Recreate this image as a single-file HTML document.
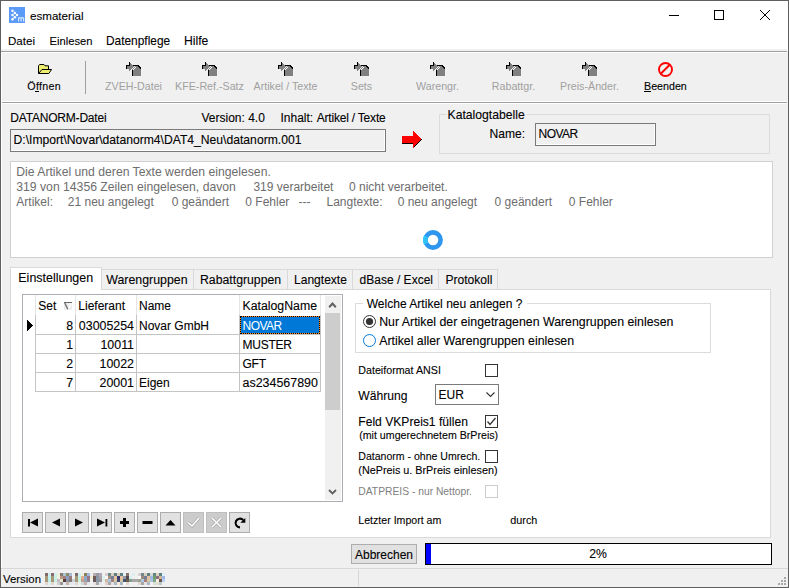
<!DOCTYPE html>
<html><head><meta charset="utf-8"><style>
html,body{margin:0;padding:0;width:789px;height:588px;overflow:hidden;background:#f0f0f0}
.r{position:absolute;display:block}
.t{position:absolute;white-space:nowrap;font-family:"Liberation Sans",sans-serif;-webkit-text-stroke:0.1px currentColor}
</style></head><body>
<div class="r" style="left:0px;top:0px;width:789px;height:588px;background:#f0f0f0"></div>
<div class="r" style="left:0px;top:0px;width:789px;height:51px;background:#fff"></div>
<div class="r" style="left:1px;top:49px;width:786px;height:2px;background:#f0f0f0"></div>
<div class="r" style="left:1px;top:51px;width:786px;height:1px;background:#a0a0a0"></div>
<div class="r" style="left:1px;top:52px;width:786px;height:1px;background:#fff"></div>
<div class="r" style="left:1px;top:101px;width:786px;height:1px;background:#fff"></div>
<div class="r" style="left:1px;top:102px;width:786px;height:1px;background:#a0a0a0"></div>
<div class="r" style="left:1px;top:103px;width:786px;height:1px;background:#fff"></div>
<div class="r" style="left:1px;top:52px;width:1px;height:516px;background:#fff"></div>
<div class="r" style="left:0px;top:0px;width:789px;height:1px;background:#5f5f5f"></div>
<div class="r" style="left:0px;top:0px;width:1px;height:588px;background:#5f5f5f"></div>
<div class="r" style="left:788px;top:0px;width:1px;height:588px;background:#5f5f5f"></div>
<div class="r" style="left:0px;top:587px;width:789px;height:1px;background:#5f5f5f"></div>
<svg class="r" style="left:9px;top:7px;shape-rendering:auto" width="16" height="16" viewBox="0 0 16 16" shape-rendering="crispEdges"><rect width="16" height="16" fill="#5b9bf7"/><g fill="#fff"><circle cx="3.5" cy="3.7" r="1.25"/><circle cx="5.8" cy="5.9" r="1.25"/><circle cx="3.5" cy="8" r="1.25"/><circle cx="8" cy="8" r="1.25"/><circle cx="5.8" cy="10.3" r="1.25"/><circle cx="3.5" cy="12.3" r="1.25"/></g><path d="M9.6 14.5V10.5M9.6 11.4Q10.9 10.1 12.1 11.2V14.5M12.1 11.4Q13.4 10.1 14.6 11.2V14.5" stroke="#d6e6ff" stroke-width="1.2" fill="none"/></svg>
<div class="t" style="left:30px;top:6.00px;font-size:11.6px;line-height:20px;color:#000;">esmaterial</div>
<div class="r" style="left:669px;top:15px;width:10px;height:1px;background:#000"></div>
<div class="r" style="left:714px;top:10px;width:10px;height:10px;border:1px solid #000;box-sizing:border-box"></div>
<svg class="r" style="left:760px;top:10px;" width="10" height="10" viewBox="0 0 10 10" shape-rendering="crispEdges"><path d="M0 0L10 10M10 0L0 10" stroke="#000" stroke-width="1.1"/></svg>
<div class="t" style="left:8px;top:31.00px;font-size:11.6px;line-height:20px;color:#000;">Datei</div>
<div class="t" style="left:49.5px;top:31.00px;font-size:11.2px;line-height:20px;color:#000;">Einlesen</div>
<div class="t" style="left:106px;top:31.00px;font-size:11.9px;line-height:20px;color:#000;">Datenpflege</div>
<div class="t" style="left:184px;top:31.00px;font-size:12.2px;line-height:20px;color:#000;">Hilfe</div>
<svg class="r" style="left:126px;top:62px;" width="16" height="15" viewBox="0 0 16 15" shape-rendering="crispEdges"><g shape-rendering="crispEdges"><path d="M0 3H3V0L8 5L3 10V7H0Z" fill="#fff" transform="translate(-0.5,0)" opacity="0"/></g><path d="M0 3H3V0L7.5 4.5L3 9V7H0Z" fill="#808080"/><path d="M0.5 3V7" stroke="#000" stroke-width="1" shape-rendering="crispEdges"/><path d="M0 3.5H3.5V0" stroke="#000" stroke-width="1" fill="none" shape-rendering="crispEdges"/><path d="M6 14V8L9.5 4H12L15 7V14Z" fill="#808080"/><path d="M6.5 8V14" stroke="#000" stroke-width="1.2" shape-rendering="crispEdges"/><path d="M7 3.5H12L15 6.5" stroke="#000" stroke-width="1.2" fill="none"/><path d="M6.5 8.5L9.5 5.2" stroke="#fff" stroke-width="1"/></svg>
<div class="t" style="left:83.5px;width:100px;text-align:center;top:76.00px;font-size:10.7px;line-height:20px;color:#a0a0a0;-webkit-text-stroke:0;">ZVEH-Datei</div>
<svg class="r" style="left:202px;top:62px;" width="16" height="15" viewBox="0 0 16 15" shape-rendering="crispEdges"><g shape-rendering="crispEdges"><path d="M0 3H3V0L8 5L3 10V7H0Z" fill="#fff" transform="translate(-0.5,0)" opacity="0"/></g><path d="M0 3H3V0L7.5 4.5L3 9V7H0Z" fill="#808080"/><path d="M0.5 3V7" stroke="#000" stroke-width="1" shape-rendering="crispEdges"/><path d="M0 3.5H3.5V0" stroke="#000" stroke-width="1" fill="none" shape-rendering="crispEdges"/><path d="M6 14V8L9.5 4H12L15 7V14Z" fill="#808080"/><path d="M6.5 8V14" stroke="#000" stroke-width="1.2" shape-rendering="crispEdges"/><path d="M7 3.5H12L15 6.5" stroke="#000" stroke-width="1.2" fill="none"/><path d="M6.5 8.5L9.5 5.2" stroke="#fff" stroke-width="1"/></svg>
<div class="t" style="left:159.5px;width:100px;text-align:center;top:76.00px;font-size:10.7px;line-height:20px;color:#a0a0a0;-webkit-text-stroke:0;">KFE-Ref.-Satz</div>
<svg class="r" style="left:278px;top:62px;" width="16" height="15" viewBox="0 0 16 15" shape-rendering="crispEdges"><g shape-rendering="crispEdges"><path d="M0 3H3V0L8 5L3 10V7H0Z" fill="#fff" transform="translate(-0.5,0)" opacity="0"/></g><path d="M0 3H3V0L7.5 4.5L3 9V7H0Z" fill="#808080"/><path d="M0.5 3V7" stroke="#000" stroke-width="1" shape-rendering="crispEdges"/><path d="M0 3.5H3.5V0" stroke="#000" stroke-width="1" fill="none" shape-rendering="crispEdges"/><path d="M6 14V8L9.5 4H12L15 7V14Z" fill="#808080"/><path d="M6.5 8V14" stroke="#000" stroke-width="1.2" shape-rendering="crispEdges"/><path d="M7 3.5H12L15 6.5" stroke="#000" stroke-width="1.2" fill="none"/><path d="M6.5 8.5L9.5 5.2" stroke="#fff" stroke-width="1"/></svg>
<div class="t" style="left:235.5px;width:100px;text-align:center;top:76.00px;font-size:10.7px;line-height:20px;color:#a0a0a0;-webkit-text-stroke:0;">Artikel / Texte</div>
<svg class="r" style="left:354px;top:62px;" width="16" height="15" viewBox="0 0 16 15" shape-rendering="crispEdges"><g shape-rendering="crispEdges"><path d="M0 3H3V0L8 5L3 10V7H0Z" fill="#fff" transform="translate(-0.5,0)" opacity="0"/></g><path d="M0 3H3V0L7.5 4.5L3 9V7H0Z" fill="#808080"/><path d="M0.5 3V7" stroke="#000" stroke-width="1" shape-rendering="crispEdges"/><path d="M0 3.5H3.5V0" stroke="#000" stroke-width="1" fill="none" shape-rendering="crispEdges"/><path d="M6 14V8L9.5 4H12L15 7V14Z" fill="#808080"/><path d="M6.5 8V14" stroke="#000" stroke-width="1.2" shape-rendering="crispEdges"/><path d="M7 3.5H12L15 6.5" stroke="#000" stroke-width="1.2" fill="none"/><path d="M6.5 8.5L9.5 5.2" stroke="#fff" stroke-width="1"/></svg>
<div class="t" style="left:311.5px;width:100px;text-align:center;top:76.00px;font-size:10.7px;line-height:20px;color:#a0a0a0;-webkit-text-stroke:0;">Sets</div>
<svg class="r" style="left:430px;top:62px;" width="16" height="15" viewBox="0 0 16 15" shape-rendering="crispEdges"><g shape-rendering="crispEdges"><path d="M0 3H3V0L8 5L3 10V7H0Z" fill="#fff" transform="translate(-0.5,0)" opacity="0"/></g><path d="M0 3H3V0L7.5 4.5L3 9V7H0Z" fill="#808080"/><path d="M0.5 3V7" stroke="#000" stroke-width="1" shape-rendering="crispEdges"/><path d="M0 3.5H3.5V0" stroke="#000" stroke-width="1" fill="none" shape-rendering="crispEdges"/><path d="M6 14V8L9.5 4H12L15 7V14Z" fill="#808080"/><path d="M6.5 8V14" stroke="#000" stroke-width="1.2" shape-rendering="crispEdges"/><path d="M7 3.5H12L15 6.5" stroke="#000" stroke-width="1.2" fill="none"/><path d="M6.5 8.5L9.5 5.2" stroke="#fff" stroke-width="1"/></svg>
<div class="t" style="left:387.5px;width:100px;text-align:center;top:76.00px;font-size:10.7px;line-height:20px;color:#a0a0a0;-webkit-text-stroke:0;">Warengr.</div>
<svg class="r" style="left:506px;top:62px;" width="16" height="15" viewBox="0 0 16 15" shape-rendering="crispEdges"><g shape-rendering="crispEdges"><path d="M0 3H3V0L8 5L3 10V7H0Z" fill="#fff" transform="translate(-0.5,0)" opacity="0"/></g><path d="M0 3H3V0L7.5 4.5L3 9V7H0Z" fill="#808080"/><path d="M0.5 3V7" stroke="#000" stroke-width="1" shape-rendering="crispEdges"/><path d="M0 3.5H3.5V0" stroke="#000" stroke-width="1" fill="none" shape-rendering="crispEdges"/><path d="M6 14V8L9.5 4H12L15 7V14Z" fill="#808080"/><path d="M6.5 8V14" stroke="#000" stroke-width="1.2" shape-rendering="crispEdges"/><path d="M7 3.5H12L15 6.5" stroke="#000" stroke-width="1.2" fill="none"/><path d="M6.5 8.5L9.5 5.2" stroke="#fff" stroke-width="1"/></svg>
<div class="t" style="left:463.5px;width:100px;text-align:center;top:76.00px;font-size:10.7px;line-height:20px;color:#a0a0a0;-webkit-text-stroke:0;">Rabattgr.</div>
<svg class="r" style="left:582px;top:62px;" width="16" height="15" viewBox="0 0 16 15" shape-rendering="crispEdges"><g shape-rendering="crispEdges"><path d="M0 3H3V0L8 5L3 10V7H0Z" fill="#fff" transform="translate(-0.5,0)" opacity="0"/></g><path d="M0 3H3V0L7.5 4.5L3 9V7H0Z" fill="#808080"/><path d="M0.5 3V7" stroke="#000" stroke-width="1" shape-rendering="crispEdges"/><path d="M0 3.5H3.5V0" stroke="#000" stroke-width="1" fill="none" shape-rendering="crispEdges"/><path d="M6 14V8L9.5 4H12L15 7V14Z" fill="#808080"/><path d="M6.5 8V14" stroke="#000" stroke-width="1.2" shape-rendering="crispEdges"/><path d="M7 3.5H12L15 6.5" stroke="#000" stroke-width="1.2" fill="none"/><path d="M6.5 8.5L9.5 5.2" stroke="#fff" stroke-width="1"/></svg>
<div class="t" style="left:539.5px;width:100px;text-align:center;top:76.00px;font-size:10.7px;line-height:20px;color:#a0a0a0;-webkit-text-stroke:0;">Preis-Änder.</div>
<svg class="r" style="left:38px;top:64px;shape-rendering:auto" width="14" height="10" viewBox="0 0 14 10" shape-rendering="crispEdges"><path d="M0.5 9.5V1.8L1.6 0.5H6L7 1.8H10.5V5.5" fill="#eded70" stroke="#000" stroke-width="1"/><path d="M0.5 9.5L4 5.5H13.6L10.8 9.5Z" fill="#eded70" stroke="#000" stroke-width="1" stroke-linejoin="round"/></svg>
<div class="t" style="left:27.3px;top:76.00px;font-size:10.7px;line-height:20px;color:#000;letter-spacing:0.28px">Öffnen</div>
<div class="r" style="left:35px;top:91px;width:4px;height:1px;background:#000"></div>
<div class="r" style="left:85px;top:61px;width:1px;height:33px;background:#a0a0a0"></div>
<svg class="r" style="left:658px;top:62px;shape-rendering:auto" width="15" height="15" viewBox="0 0 15 15" shape-rendering="crispEdges"><circle cx="7.5" cy="7.5" r="6.5" fill="none" stroke="#f00" stroke-width="1.9"/><path d="M11.5 3L3 11.5" stroke="#f00" stroke-width="2"/></svg>
<div class="t" style="left:644px;top:76.00px;font-size:10.7px;line-height:20px;color:#000;">Beenden</div>
<div class="r" style="left:644px;top:91px;width:7px;height:1px;background:#000"></div>
<div class="t" style="left:10.3px;top:108.00px;font-size:12px;line-height:20px;color:#000;letter-spacing:-0.2px">DATANORM-Datei</div>
<div class="t" style="left:201.5px;top:108.00px;font-size:12px;line-height:20px;color:#000;">Version: 4.0</div>
<div class="t" style="left:280.5px;top:108.00px;font-size:12px;line-height:20px;color:#000;">Inhalt:</div>
<div class="t" style="left:316.7px;top:108.00px;font-size:12px;line-height:20px;color:#000;letter-spacing:-0.2px">Artikel / Texte</div>
<div class="r" style="left:10px;top:129px;width:376px;height:23px;border:1px solid #7a7a7a;box-sizing:border-box;background:#f0f0f0;box-shadow:inset -1px -1px 0 #fff"></div>
<div class="t" style="left:13.5px;top:130.00px;font-size:12.15px;line-height:20px;color:#000;">D:\Import\Novar\datanorm4\DAT4_Neu\datanorm.001</div>
<svg class="r" style="left:401px;top:130px;" width="22" height="19" viewBox="0 0 22 19" shape-rendering="crispEdges"><path d="M1 6H12V1L20.5 9.5L12 18V14H1Z" fill="#f00"/><path d="M1 13.5H12M12.5 17.5L20.5 9.5" stroke="#000" stroke-width="1.2" fill="none"/></svg>
<div class="r" style="left:439px;top:114px;width:331px;height:40px;border:1px solid #dcdcdc;box-sizing:border-box"></div>
<div class="r" style="left:447px;top:108px;width:79px;height:12px;background:#f0f0f0"></div>
<div class="t" style="left:447.5px;top:105.00px;font-size:12.2px;line-height:20px;color:#000;">Katalogtabelle</div>
<div class="t" style="left:489.5px;top:124.00px;font-size:12.1px;line-height:20px;color:#000;">Name:</div>
<div class="r" style="left:535px;top:123px;width:121px;height:23px;border:1px solid #7a7a7a;box-sizing:border-box;background:#f0f0f0;box-shadow:inset -1px -1px 0 #fff"></div>
<div class="t" style="left:538.5px;top:124.00px;font-size:12px;line-height:20px;color:#000;letter-spacing:-0.5px">NOVAR</div>
<div class="r" style="left:10px;top:161px;width:763px;height:97px;border:1px solid #d0d0d0;box-sizing:border-box;background:#fff"></div>
<div class="t" style="left:16.3px;top:162.00px;font-size:12.2px;line-height:20px;color:#6d6d6d;-webkit-text-stroke:0;">Die Artikel und deren Texte werden eingelesen.</div>
<div class="t" style="left:16.3px;top:177.00px;font-size:12.2px;line-height:20px;color:#6d6d6d;-webkit-text-stroke:0;">319 von 14356 Zeilen eingelesen, davon</div>
<div class="t" style="left:253.4px;top:177.00px;font-size:12px;line-height:20px;color:#6d6d6d;-webkit-text-stroke:0;">319 verarbeitet</div>
<div class="t" style="left:349px;top:177.00px;font-size:12px;line-height:20px;color:#6d6d6d;-webkit-text-stroke:0;">0 nicht verarbeitet.</div>
<div class="t" style="left:16.3px;top:192.00px;font-size:12px;line-height:20px;color:#6d6d6d;-webkit-text-stroke:0;">Artikel:</div>
<div class="t" style="left:67.8px;top:192.00px;font-size:12px;line-height:20px;color:#6d6d6d;-webkit-text-stroke:0;">21 neu angelegt</div>
<div class="t" style="left:171.7px;top:192.00px;font-size:12px;line-height:20px;color:#6d6d6d;-webkit-text-stroke:0;">0 geändert</div>
<div class="t" style="left:245.3px;top:192.00px;font-size:12px;line-height:20px;color:#6d6d6d;-webkit-text-stroke:0;">0 Fehler</div>
<div class="t" style="left:298.6px;top:192.00px;font-size:12px;line-height:20px;color:#6d6d6d;-webkit-text-stroke:0;">---</div>
<div class="t" style="left:326.5px;top:192.00px;font-size:12px;line-height:20px;color:#6d6d6d;-webkit-text-stroke:0;">Langtexte:</div>
<div class="t" style="left:397.7px;top:192.00px;font-size:12px;line-height:20px;color:#6d6d6d;-webkit-text-stroke:0;">0 neu angelegt</div>
<div class="t" style="left:494.6px;top:192.00px;font-size:12px;line-height:20px;color:#6d6d6d;-webkit-text-stroke:0;">0 geändert</div>
<div class="t" style="left:568.8px;top:192.00px;font-size:12px;line-height:20px;color:#6d6d6d;-webkit-text-stroke:0;">0 Fehler</div>
<svg class="r" style="left:423px;top:230px;shape-rendering:auto" width="20" height="20" viewBox="0 0 20 20" shape-rendering="crispEdges"><circle cx="10" cy="10" r="7.6" fill="none" stroke="#2f96f0" stroke-width="4.6"/><path d="M3.2 6.4A7.6 7.6 0 0 0 3.2 13.6" fill="none" stroke="#2ec4f9" stroke-width="4.6"/></svg>
<div class="r" style="left:10px;top:289px;width:761px;height:249px;border:1px solid #d9d9d9;box-sizing:border-box;background:#fff"></div>
<div class="r" style="left:101px;top:269px;width:93px;height:21px;border:1px solid #d9d9d9;box-sizing:border-box;background:#f0f0f0"></div>
<div class="t" style="left:106.3px;top:270.00px;font-size:12.35px;line-height:20px;color:#000;">Warengruppen</div>
<div class="r" style="left:193px;top:269px;width:95px;height:21px;border:1px solid #d9d9d9;box-sizing:border-box;background:#f0f0f0"></div>
<div class="t" style="left:200px;top:270.00px;font-size:12.27px;line-height:20px;color:#000;">Rabattgruppen</div>
<div class="r" style="left:287px;top:269px;width:66px;height:21px;border:1px solid #d9d9d9;box-sizing:border-box;background:#f0f0f0"></div>
<div class="t" style="left:294px;top:270.00px;font-size:12.05px;line-height:20px;color:#000;">Langtexte</div>
<div class="r" style="left:352px;top:269px;width:87px;height:21px;border:1px solid #d9d9d9;box-sizing:border-box;background:#f0f0f0"></div>
<div class="t" style="left:359.6px;top:270.00px;font-size:12.0px;line-height:20px;color:#000;">dBase / Excel</div>
<div class="r" style="left:438px;top:269px;width:60px;height:21px;border:1px solid #d9d9d9;box-sizing:border-box;background:#f0f0f0"></div>
<div class="t" style="left:445.4px;top:270.00px;font-size:12.1px;line-height:20px;color:#000;">Protokoll</div>
<div class="r" style="left:10px;top:267px;width:92px;height:23px;border:1px solid #d9d9d9;border-bottom:none;box-sizing:border-box;background:#fff"></div>
<div class="t" style="left:18.3px;top:268.00px;font-size:12.48px;line-height:20px;color:#000;">Einstellungen</div>
<div class="r" style="left:22px;top:294px;width:321px;height:208px;border:1px solid #abadb3;box-sizing:border-box;background:#fff"></div>
<div class="r" style="left:35px;top:295px;width:1px;height:20px;background:#e5e5e5"></div>
<div class="r" style="left:75px;top:295px;width:1px;height:20px;background:#e5e5e5"></div>
<div class="r" style="left:136px;top:295px;width:1px;height:20px;background:#e5e5e5"></div>
<div class="r" style="left:239px;top:295px;width:1px;height:20px;background:#e5e5e5"></div>
<div class="r" style="left:320px;top:295px;width:1px;height:20px;background:#e5e5e5"></div>
<div class="r" style="left:36px;top:334px;width:285px;height:1px;background:#c4c4c4"></div>
<div class="r" style="left:36px;top:353px;width:285px;height:1px;background:#c4c4c4"></div>
<div class="r" style="left:36px;top:372px;width:285px;height:1px;background:#c4c4c4"></div>
<div class="r" style="left:36px;top:391px;width:285px;height:1px;background:#c4c4c4"></div>
<div class="r" style="left:35px;top:315px;width:1px;height:77px;background:#c4c4c4"></div>
<div class="r" style="left:75px;top:315px;width:1px;height:77px;background:#c4c4c4"></div>
<div class="r" style="left:136px;top:315px;width:1px;height:77px;background:#c4c4c4"></div>
<div class="r" style="left:239px;top:315px;width:1px;height:77px;background:#c4c4c4"></div>
<div class="r" style="left:320px;top:315px;width:1px;height:77px;background:#c4c4c4"></div>
<div class="t" style="left:38.3px;top:296.00px;font-size:12px;line-height:20px;color:#000;">Set</div>
<div class="t" style="left:78.3px;top:296.00px;font-size:12px;line-height:20px;color:#000;">Lieferant</div>
<div class="t" style="left:139px;top:296.00px;font-size:12px;line-height:20px;color:#000;">Name</div>
<div class="t" style="left:242.5px;top:296.00px;font-size:12.3px;line-height:20px;color:#000;">KatalogName</div>
<svg class="r" style="left:64px;top:302px;shape-rendering:auto" width="8" height="8" viewBox="0 0 8 8" shape-rendering="crispEdges"><rect width="8" height="8" fill="#ececec"/><path d="M7.2 1.5L4.2 7.5" stroke="#fff" stroke-width="1.2"/><path d="M0 0.5H8" stroke="#6a6a6a" stroke-width="1"/><path d="M0.8 1L3.8 7.3" stroke="#6a6a6a" stroke-width="1.3"/></svg>
<svg class="r" style="left:27px;top:320px;" width="7" height="11" viewBox="0 0 7 11" shape-rendering="crispEdges"><path d="M0 0L6 5.5L0 11Z" fill="#000"/></svg>
<div class="t" style="left:33px;width:40px;text-align:right;top:316.00px;font-size:12.3px;line-height:20px;color:#000;">8</div>
<div class="t" style="left:54px;width:80px;text-align:right;top:316.00px;font-size:12.4px;line-height:20px;color:#000;">03005254</div>
<div class="t" style="left:139px;top:316.00px;font-size:12.0px;line-height:20px;color:#000;">Novar GmbH</div>
<div class="r" style="left:240px;top:316px;width:80px;height:18px;background:#0078d7;border:1px dotted #000;box-sizing:border-box;box-shadow:inset 0 0 0 0 #000;outline:0"></div>
<div class="r" style="left:240px;top:316px;width:80px;height:18px;border:1px solid #ff8a1c;box-sizing:border-box"></div>
<div class="r" style="left:240px;top:316px;width:80px;height:18px;border:1px dotted #000;box-sizing:border-box"></div>
<div class="t" style="left:242.5px;top:316.00px;font-size:12px;line-height:20px;color:#fff;-webkit-text-stroke:0;letter-spacing:-0.5px">NOVAR</div>
<div class="t" style="left:33px;width:40px;text-align:right;top:335.00px;font-size:12.3px;line-height:20px;color:#000;">1</div>
<div class="t" style="left:54px;width:80px;text-align:right;top:335.00px;font-size:12.4px;line-height:20px;color:#000;">10011</div>
<div class="t" style="left:242.5px;top:335.00px;font-size:12px;line-height:20px;color:#000;letter-spacing:-0.25px">MUSTER</div>
<div class="t" style="left:33px;width:40px;text-align:right;top:354.00px;font-size:12.3px;line-height:20px;color:#000;">2</div>
<div class="t" style="left:54px;width:80px;text-align:right;top:354.00px;font-size:12.4px;line-height:20px;color:#000;">10022</div>
<div class="t" style="left:242.5px;top:354.00px;font-size:12px;line-height:20px;color:#000;letter-spacing:-0.25px">GFT</div>
<div class="t" style="left:33px;width:40px;text-align:right;top:373.00px;font-size:12.3px;line-height:20px;color:#000;">7</div>
<div class="t" style="left:54px;width:80px;text-align:right;top:373.00px;font-size:12.4px;line-height:20px;color:#000;">20001</div>
<div class="t" style="left:139px;top:373.00px;font-size:12.0px;line-height:20px;color:#000;">Eigen</div>
<div class="t" style="left:242.5px;top:373.00px;font-size:12.45px;line-height:20px;color:#000;">as234567890</div>
<div class="r" style="left:325px;top:296px;width:16px;height:204px;background:#f0f0f0"></div>
<div class="r" style="left:325px;top:313px;width:15px;height:97px;background:#cdcdcd"></div>
<svg class="r" style="left:328px;top:302px;shape-rendering:auto" width="9" height="6" viewBox="0 0 9 6" shape-rendering="crispEdges"><path d="M1.2 5.2L4.5 1.6L7.8 5.2" stroke="#606060" stroke-width="2" fill="none"/></svg>
<svg class="r" style="left:328px;top:489px;shape-rendering:auto" width="9" height="6" viewBox="0 0 9 6" shape-rendering="crispEdges"><path d="M1 1L4.5 4.5L8 1" stroke="#606060" stroke-width="1.8" fill="none"/></svg>
<div class="r" style="left:22px;top:512px;width:21px;height:21px;background:#e1e1e1;border:1px solid #adadad;box-sizing:border-box"></div>
<div class="r" style="left:45px;top:512px;width:21px;height:21px;background:#e1e1e1;border:1px solid #adadad;box-sizing:border-box"></div>
<div class="r" style="left:68px;top:512px;width:21px;height:21px;background:#e1e1e1;border:1px solid #adadad;box-sizing:border-box"></div>
<div class="r" style="left:91px;top:512px;width:21px;height:21px;background:#e1e1e1;border:1px solid #adadad;box-sizing:border-box"></div>
<div class="r" style="left:114px;top:512px;width:21px;height:21px;background:#e1e1e1;border:1px solid #adadad;box-sizing:border-box"></div>
<div class="r" style="left:137px;top:512px;width:21px;height:21px;background:#e1e1e1;border:1px solid #adadad;box-sizing:border-box"></div>
<div class="r" style="left:160px;top:512px;width:21px;height:21px;background:#e1e1e1;border:1px solid #adadad;box-sizing:border-box"></div>
<div class="r" style="left:183px;top:512px;width:21px;height:21px;background:#cccccc;border:1px solid #bfbfbf;box-sizing:border-box"></div>
<div class="r" style="left:206px;top:512px;width:21px;height:21px;background:#cccccc;border:1px solid #bfbfbf;box-sizing:border-box"></div>
<div class="r" style="left:229px;top:512px;width:21px;height:21px;background:#e1e1e1;border:1px solid #adadad;box-sizing:border-box"></div>
<svg class="r" style="left:22px;top:512px;shape-rendering:auto" width="21" height="21" viewBox="0 0 21 21" shape-rendering="crispEdges"><g fill="#000"><rect x="6" y="7" width="2" height="7.5"/><path d="M16 6.5V14.5L8 10.5Z"/></g></svg>
<svg class="r" style="left:45px;top:512px;shape-rendering:auto" width="21" height="21" viewBox="0 0 21 21" shape-rendering="crispEdges"><g fill="#000"><path d="M15 6.5V14.5L7 10.5Z"/></g></svg>
<svg class="r" style="left:68px;top:512px;shape-rendering:auto" width="21" height="21" viewBox="0 0 21 21" shape-rendering="crispEdges"><g fill="#000"><path d="M7 6.5V14.5L15 10.5Z"/></g></svg>
<svg class="r" style="left:91px;top:512px;shape-rendering:auto" width="21" height="21" viewBox="0 0 21 21" shape-rendering="crispEdges"><g fill="#000"><path d="M6 6.5V14.5L14 10.5Z"/><rect x="14.5" y="7" width="1.8" height="7.5"/></g></svg>
<svg class="r" style="left:114px;top:512px;shape-rendering:auto" width="21" height="21" viewBox="0 0 21 21" shape-rendering="crispEdges"><g fill="#000"><rect x="6" y="9" width="9" height="3"/><rect x="9" y="6" width="3" height="9"/></g></svg>
<svg class="r" style="left:137px;top:512px;shape-rendering:auto" width="21" height="21" viewBox="0 0 21 21" shape-rendering="crispEdges"><g fill="#000"><rect x="5.5" y="9" width="10" height="3"/></g></svg>
<svg class="r" style="left:160px;top:512px;shape-rendering:auto" width="21" height="21" viewBox="0 0 21 21" shape-rendering="crispEdges"><g fill="#000"><path d="M5.5 13.5H15.5L10.5 8Z"/></g></svg>
<svg class="r" style="left:183px;top:512px;shape-rendering:auto" width="21" height="21" viewBox="0 0 21 21" shape-rendering="crispEdges"><g fill="#000"><path d="M5 10.5L9 14L16 6" stroke="#aaa" stroke-width="3" fill="none"/><path d="M5 10.5L9 14L16 6" stroke="#fff" stroke-width="1.5" fill="none"/></g></svg>
<svg class="r" style="left:206px;top:512px;shape-rendering:auto" width="21" height="21" viewBox="0 0 21 21" shape-rendering="crispEdges"><g fill="#000"><path d="M6 6L15 15M15 6L6 15" stroke="#aaa" stroke-width="3" fill="none"/><path d="M6 6L15 15M15 6L6 15" stroke="#fff" stroke-width="1.5" fill="none"/></g></svg>
<svg class="r" style="left:229px;top:512px;shape-rendering:auto" width="21" height="21" viewBox="0 0 21 21" shape-rendering="crispEdges"><g fill="#000"><path d="M14.2 8A4.4 4.4 0 1 0 11 15.4" stroke="#000" stroke-width="2.1" fill="none"/><path d="M16.3 6V10.8H11.3Z"/></g></svg>
<div class="r" style="left:355px;top:303px;width:356px;height:50px;border:1px solid #dcdcdc;box-sizing:border-box"></div>
<div class="r" style="left:363px;top:296px;width:164px;height:12px;background:#fff"></div>
<div class="t" style="left:366.7px;top:294.00px;font-size:12.05px;line-height:20px;color:#000;">Welche Artikel neu anlegen ?</div>
<svg class="r" style="left:363px;top:315px;shape-rendering:auto" width="13" height="13" viewBox="0 0 13 13" shape-rendering="crispEdges"><circle cx="6.5" cy="6.5" r="6" fill="#fff" stroke="#333" stroke-width="1"/><circle cx="6.5" cy="6.5" r="3.6" fill="#333"/></svg>
<div class="t" style="left:379.2px;top:312.00px;font-size:12.33px;line-height:20px;color:#000;">Nur Artikel der eingetragenen Warengruppen einlesen</div>
<svg class="r" style="left:363px;top:334px;shape-rendering:auto" width="13" height="13" viewBox="0 0 13 13" shape-rendering="crispEdges"><circle cx="6.5" cy="6.5" r="6" fill="#fff" stroke="#0078d7" stroke-width="1"/></svg>
<div class="t" style="left:379.2px;top:331.00px;font-size:12.33px;line-height:20px;color:#000;">Artikel aller Warengruppen einlesen</div>
<div class="t" style="left:358.3px;top:360.00px;font-size:10.7px;line-height:20px;color:#000;">Dateiformat ANSI</div>
<div class="r" style="left:485px;top:364px;width:13px;height:13px;border:1px solid #333;box-sizing:border-box;background:#fff"></div>
<div class="t" style="left:358.3px;top:386.00px;font-size:12.1px;line-height:20px;color:#000;">Währung</div>
<div class="r" style="left:435px;top:384px;width:64px;height:21px;border:1px solid #7a7a7a;box-sizing:border-box;background:#fff"></div>
<div class="t" style="left:438.5px;top:385.00px;font-size:12px;line-height:20px;color:#000;">EUR</div>
<svg class="r" style="left:486px;top:392px;shape-rendering:auto" width="9" height="6" viewBox="0 0 9 6" shape-rendering="crispEdges"><path d="M0.5 0.5L4.5 4.5L8.5 0.5" stroke="#333" stroke-width="1.1" fill="none"/></svg>
<div class="t" style="left:358.3px;top:412.00px;font-size:12.1px;line-height:20px;color:#000;">Feld VKPreis1 füllen</div>
<div class="r" style="left:485px;top:415px;width:13px;height:13px;border:1px solid #333;box-sizing:border-box;background:#fff"></div>
<svg class="r" style="left:486px;top:416px;shape-rendering:auto" width="11" height="11" viewBox="0 0 11 11" shape-rendering="crispEdges"><path d="M1.5 5.5L4 8.5L9.5 2" stroke="#333" stroke-width="1.3" fill="none"/></svg>
<div class="t" style="left:359.2px;top:425.00px;font-size:10.65px;line-height:20px;color:#000;">(mit umgerechnetem BrPreis)</div>
<div class="t" style="left:358.3px;top:446.00px;font-size:10.55px;line-height:20px;color:#000;">Datanorm - ohne Umrech.</div>
<div class="r" style="left:485px;top:450px;width:13px;height:13px;border:1px solid #333;box-sizing:border-box;background:#fff"></div>
<div class="t" style="left:358.3px;top:460.00px;font-size:10.8px;line-height:20px;color:#000;">(NePreis u. BrPreis einlesen)</div>
<div class="t" style="left:358.3px;top:482.00px;font-size:10.3px;line-height:20px;color:#808080;-webkit-text-stroke:0;">DATPREIS - nur Nettopr.</div>
<div class="r" style="left:485px;top:485px;width:13px;height:13px;border:1px solid #cccccc;box-sizing:border-box;background:#fff"></div>
<div class="t" style="left:358.3px;top:510.00px;font-size:10.6px;line-height:20px;color:#000;">Letzter Import am</div>
<div class="t" style="left:510.3px;top:510.00px;font-size:10.8px;line-height:20px;color:#000;">durch</div>
<div class="r" style="left:351px;top:544px;width:66px;height:20px;background:#e1e1e1;border:1px solid #adadad;box-sizing:border-box"></div>
<div class="t" style="left:344.0px;width:80px;text-align:center;top:545.00px;font-size:12px;line-height:20px;color:#000;">Abbrechen</div>
<div class="r" style="left:425px;top:543px;width:347px;height:22px;border:1px solid #000;box-sizing:border-box;background:#fff"></div>
<div class="r" style="left:426px;top:544px;width:5px;height:20px;background:#0000ff"></div>
<div class="t" style="left:568.0px;width:60px;text-align:center;top:544.00px;font-size:12.2px;line-height:20px;color:#000;">2%</div>
<div class="r" style="left:1px;top:568px;width:787px;height:1px;background:#d7d7d7"></div>
<div class="r" style="left:358px;top:570px;width:1px;height:16px;background:#d7d7d7"></div>
<div class="t" style="left:3px;top:569.00px;font-size:11.4px;line-height:20px;color:#000;">Version</div>
<div class="r" style="left:45px;top:573px;width:3px;height:3px;background:#806a6a"></div>
<div class="r" style="left:48px;top:573px;width:3px;height:3px;background:#d0f0f0"></div>
<div class="r" style="left:51px;top:573px;width:3px;height:3px;background:#8a6a6a"></div>
<div class="r" style="left:54px;top:573px;width:3px;height:3px;background:#d0f0f0"></div>
<div class="r" style="left:57px;top:573px;width:3px;height:3px;background:#f0f0d8"></div>
<div class="r" style="left:60px;top:573px;width:3px;height:3px;background:#8a7878"></div>
<div class="r" style="left:63px;top:573px;width:3px;height:3px;background:#a8c8d0"></div>
<div class="r" style="left:66px;top:573px;width:3px;height:3px;background:#8a8a6a"></div>
<div class="r" style="left:69px;top:573px;width:3px;height:3px;background:#a8bcd8"></div>
<div class="r" style="left:72px;top:573px;width:3px;height:3px;background:#f0f0f0"></div>
<div class="r" style="left:75px;top:573px;width:3px;height:3px;background:#806a6a"></div>
<div class="r" style="left:78px;top:573px;width:3px;height:3px;background:#d0f0f0"></div>
<div class="r" style="left:81px;top:573px;width:3px;height:3px;background:#f0f0e0"></div>
<div class="r" style="left:84px;top:573px;width:3px;height:3px;background:#8a8060"></div>
<div class="r" style="left:87px;top:573px;width:3px;height:3px;background:#a0b8e0"></div>
<div class="r" style="left:90px;top:573px;width:3px;height:3px;background:#f0f0f0"></div>
<div class="r" style="left:93px;top:573px;width:3px;height:3px;background:#b8b0b0"></div>
<div class="r" style="left:96px;top:573px;width:3px;height:3px;background:#989ca0"></div>
<div class="r" style="left:99px;top:573px;width:3px;height:3px;background:#b0a8b8"></div>
<div class="r" style="left:102px;top:573px;width:3px;height:3px;background:#f0f0f0"></div>
<div class="r" style="left:105px;top:573px;width:3px;height:3px;background:#d8d0d0"></div>
<div class="r" style="left:108px;top:573px;width:3px;height:3px;background:#708888"></div>
<div class="r" style="left:111px;top:573px;width:3px;height:3px;background:#d8d0c0"></div>
<div class="r" style="left:114px;top:573px;width:3px;height:3px;background:#608080"></div>
<div class="r" style="left:117px;top:573px;width:3px;height:3px;background:#d8d0c0"></div>
<div class="r" style="left:120px;top:573px;width:3px;height:3px;background:#608080"></div>
<div class="r" style="left:123px;top:573px;width:3px;height:3px;background:#e0f0f8"></div>
<div class="r" style="left:126px;top:573px;width:3px;height:3px;background:#887068"></div>
<div class="r" style="left:129px;top:573px;width:3px;height:3px;background:#f0f0f0"></div>
<div class="r" style="left:132px;top:573px;width:3px;height:3px;background:#d8f0f0"></div>
<div class="r" style="left:135px;top:573px;width:3px;height:3px;background:#f0f0f0"></div>
<div class="r" style="left:138px;top:573px;width:3px;height:3px;background:#d8d0d0"></div>
<div class="r" style="left:141px;top:573px;width:3px;height:3px;background:#708888"></div>
<div class="r" style="left:144px;top:573px;width:3px;height:3px;background:#d8d0c0"></div>
<div class="r" style="left:147px;top:573px;width:3px;height:3px;background:#608080"></div>
<div class="r" style="left:150px;top:573px;width:3px;height:3px;background:#d8d8d8"></div>
<div class="r" style="left:153px;top:573px;width:3px;height:3px;background:#608880"></div>
<div class="r" style="left:156px;top:573px;width:3px;height:3px;background:#e0d0c0"></div>
<div class="r" style="left:159px;top:573px;width:3px;height:3px;background:#608080"></div>
<div class="r" style="left:162px;top:573px;width:3px;height:3px;background:#e0f0f8"></div>
<div class="r" style="left:45px;top:576px;width:3px;height:3px;background:#a89878"></div>
<div class="r" style="left:48px;top:576px;width:3px;height:3px;background:#c0f0f0"></div>
<div class="r" style="left:51px;top:576px;width:3px;height:3px;background:#a89878"></div>
<div class="r" style="left:54px;top:576px;width:3px;height:3px;background:#c8f0e8"></div>
<div class="r" style="left:57px;top:576px;width:3px;height:3px;background:#f0f0e0"></div>
<div class="r" style="left:60px;top:576px;width:3px;height:3px;background:#b89880"></div>
<div class="r" style="left:63px;top:576px;width:3px;height:3px;background:#a08080"></div>
<div class="r" style="left:66px;top:576px;width:3px;height:3px;background:#8aa0c8"></div>
<div class="r" style="left:69px;top:576px;width:3px;height:3px;background:#987878"></div>
<div class="r" style="left:72px;top:576px;width:3px;height:3px;background:#f0f0f0"></div>
<div class="r" style="left:75px;top:576px;width:3px;height:3px;background:#a89878"></div>
<div class="r" style="left:78px;top:576px;width:3px;height:3px;background:#c0f0e8"></div>
<div class="r" style="left:81px;top:576px;width:3px;height:3px;background:#e0b090"></div>
<div class="r" style="left:84px;top:576px;width:3px;height:3px;background:#90a8c8"></div>
<div class="r" style="left:87px;top:576px;width:3px;height:3px;background:#987888"></div>
<div class="r" style="left:90px;top:576px;width:3px;height:3px;background:#f0f0d0"></div>
<div class="r" style="left:93px;top:576px;width:3px;height:3px;background:#705858"></div>
<div class="r" style="left:96px;top:576px;width:3px;height:3px;background:#8898a8"></div>
<div class="r" style="left:99px;top:576px;width:3px;height:3px;background:#b0a0a8"></div>
<div class="r" style="left:102px;top:576px;width:3px;height:3px;background:#d8f0f0"></div>
<div class="r" style="left:105px;top:576px;width:3px;height:3px;background:#f8f8f8"></div>
<div class="r" style="left:108px;top:576px;width:3px;height:3px;background:#a89080"></div>
<div class="r" style="left:111px;top:576px;width:3px;height:3px;background:#708098"></div>
<div class="r" style="left:114px;top:576px;width:3px;height:3px;background:#e8c0a0"></div>
<div class="r" style="left:117px;top:576px;width:3px;height:3px;background:#383870"></div>
<div class="r" style="left:120px;top:576px;width:3px;height:3px;background:#e8c0a0"></div>
<div class="r" style="left:123px;top:576px;width:3px;height:3px;background:#9098a8"></div>
<div class="r" style="left:126px;top:576px;width:3px;height:3px;background:#584850"></div>
<div class="r" style="left:129px;top:576px;width:3px;height:3px;background:#d8f0f0"></div>
<div class="r" style="left:132px;top:576px;width:3px;height:3px;background:#f0f0f0"></div>
<div class="r" style="left:135px;top:576px;width:3px;height:3px;background:#f0f0f0"></div>
<div class="r" style="left:138px;top:576px;width:3px;height:3px;background:#f8f8f8"></div>
<div class="r" style="left:141px;top:576px;width:3px;height:3px;background:#a08878"></div>
<div class="r" style="left:144px;top:576px;width:3px;height:3px;background:#708098"></div>
<div class="r" style="left:147px;top:576px;width:3px;height:3px;background:#e8c0a0"></div>
<div class="r" style="left:150px;top:576px;width:3px;height:3px;background:#a0b8e0"></div>
<div class="r" style="left:153px;top:576px;width:3px;height:3px;background:#70a070"></div>
<div class="r" style="left:156px;top:576px;width:3px;height:3px;background:#907080"></div>
<div class="r" style="left:159px;top:576px;width:3px;height:3px;background:#d0b898"></div>
<div class="r" style="left:162px;top:576px;width:3px;height:3px;background:#a0b8e8"></div>
<div class="r" style="left:45px;top:579px;width:3px;height:3px;background:#a89878"></div>
<div class="r" style="left:48px;top:579px;width:3px;height:3px;background:#c0f0e8"></div>
<div class="r" style="left:51px;top:579px;width:3px;height:3px;background:#a89878"></div>
<div class="r" style="left:54px;top:579px;width:3px;height:3px;background:#c8f0e0"></div>
<div class="r" style="left:57px;top:579px;width:3px;height:3px;background:#c8b8c8"></div>
<div class="r" style="left:60px;top:579px;width:3px;height:3px;background:#e8e8c8"></div>
<div class="r" style="left:63px;top:579px;width:3px;height:3px;background:#583838"></div>
<div class="r" style="left:66px;top:579px;width:3px;height:3px;background:#8898a8"></div>
<div class="r" style="left:69px;top:579px;width:3px;height:3px;background:#887878"></div>
<div class="r" style="left:72px;top:579px;width:3px;height:3px;background:#c8d0d8"></div>
<div class="r" style="left:75px;top:579px;width:3px;height:3px;background:#a89878"></div>
<div class="r" style="left:78px;top:579px;width:3px;height:3px;background:#c8f0e0"></div>
<div class="r" style="left:81px;top:579px;width:3px;height:3px;background:#c8a088"></div>
<div class="r" style="left:84px;top:579px;width:3px;height:3px;background:#90a8b8"></div>
<div class="r" style="left:87px;top:579px;width:3px;height:3px;background:#908090"></div>
<div class="r" style="left:90px;top:579px;width:3px;height:3px;background:#f0f0f0"></div>
<div class="r" style="left:93px;top:579px;width:3px;height:3px;background:#685858"></div>
<div class="r" style="left:96px;top:579px;width:3px;height:3px;background:#8898a8"></div>
<div class="r" style="left:99px;top:579px;width:3px;height:3px;background:#a09898"></div>
<div class="r" style="left:102px;top:579px;width:3px;height:3px;background:#e0f0f0"></div>
<div class="r" style="left:105px;top:579px;width:3px;height:3px;background:#d0b8a0"></div>
<div class="r" style="left:108px;top:579px;width:3px;height:3px;background:#b0c8e8"></div>
<div class="r" style="left:111px;top:579px;width:3px;height:3px;background:#a08080"></div>
<div class="r" style="left:114px;top:579px;width:3px;height:3px;background:#d8c8a0"></div>
<div class="r" style="left:117px;top:579px;width:3px;height:3px;background:#404870"></div>
<div class="r" style="left:120px;top:579px;width:3px;height:3px;background:#d8c8a0"></div>
<div class="r" style="left:123px;top:579px;width:3px;height:3px;background:#405878"></div>
<div class="r" style="left:126px;top:579px;width:3px;height:3px;background:#705848"></div>
<div class="r" style="left:129px;top:579px;width:3px;height:3px;background:#80a090"></div>
<div class="r" style="left:132px;top:579px;width:3px;height:3px;background:#a8a8a8"></div>
<div class="r" style="left:135px;top:579px;width:3px;height:3px;background:#a8a8a8"></div>
<div class="r" style="left:138px;top:579px;width:3px;height:3px;background:#a0a090"></div>
<div class="r" style="left:141px;top:579px;width:3px;height:3px;background:#b0c8e8"></div>
<div class="r" style="left:144px;top:579px;width:3px;height:3px;background:#a08080"></div>
<div class="r" style="left:147px;top:579px;width:3px;height:3px;background:#d8c8a0"></div>
<div class="r" style="left:150px;top:579px;width:3px;height:3px;background:#a8c0e8"></div>
<div class="r" style="left:153px;top:579px;width:3px;height:3px;background:#80a880"></div>
<div class="r" style="left:156px;top:579px;width:3px;height:3px;background:#f8f0e8"></div>
<div class="r" style="left:159px;top:579px;width:3px;height:3px;background:#705848"></div>
<div class="r" style="left:162px;top:579px;width:3px;height:3px;background:#b8d0f0"></div>
<div class="r" style="left:45px;top:582px;width:3px;height:3px;background:#e0d8d0"></div>
<div class="r" style="left:48px;top:582px;width:3px;height:3px;background:#e0f0f0"></div>
<div class="r" style="left:51px;top:582px;width:3px;height:3px;background:#e0d8d0"></div>
<div class="r" style="left:54px;top:582px;width:3px;height:3px;background:#e8f0e8"></div>
<div class="r" style="left:57px;top:582px;width:3px;height:3px;background:#d0d0d0"></div>
<div class="r" style="left:60px;top:582px;width:3px;height:3px;background:#989898"></div>
<div class="r" style="left:63px;top:582px;width:3px;height:3px;background:#e0e8f0"></div>
<div class="r" style="left:66px;top:582px;width:3px;height:3px;background:#c8b0a8"></div>
<div class="r" style="left:69px;top:582px;width:3px;height:3px;background:#e0e8e8"></div>
<div class="r" style="left:72px;top:582px;width:3px;height:3px;background:#e8e8f0"></div>
<div class="r" style="left:75px;top:582px;width:3px;height:3px;background:#e0d8d0"></div>
<div class="r" style="left:78px;top:582px;width:3px;height:3px;background:#e8f0e8"></div>
<div class="r" style="left:81px;top:582px;width:3px;height:3px;background:#d0d8e0"></div>
<div class="r" style="left:84px;top:582px;width:3px;height:3px;background:#c8b0a8"></div>
<div class="r" style="left:87px;top:582px;width:3px;height:3px;background:#e0e8f0"></div>
<div class="r" style="left:90px;top:582px;width:3px;height:3px;background:#f0f0f0"></div>
<div class="r" style="left:93px;top:582px;width:3px;height:3px;background:#e8e0e0"></div>
<div class="r" style="left:96px;top:582px;width:3px;height:3px;background:#a8a8a8"></div>
<div class="r" style="left:99px;top:582px;width:3px;height:3px;background:#e0e8f0"></div>
<div class="r" style="left:102px;top:582px;width:3px;height:3px;background:#f0f0f0"></div>
<div class="r" style="left:105px;top:582px;width:3px;height:3px;background:#e0d0c8"></div>
<div class="r" style="left:108px;top:582px;width:3px;height:3px;background:#a8a8a8"></div>
<div class="r" style="left:111px;top:582px;width:3px;height:3px;background:#e8e0e0"></div>
<div class="r" style="left:114px;top:582px;width:3px;height:3px;background:#a8b8c8"></div>
<div class="r" style="left:117px;top:582px;width:3px;height:3px;background:#f8e8d8"></div>
<div class="r" style="left:120px;top:582px;width:3px;height:3px;background:#a8b8c8"></div>
<div class="r" style="left:123px;top:582px;width:3px;height:3px;background:#f8f8f8"></div>
<div class="r" style="left:126px;top:582px;width:3px;height:3px;background:#e0d8d0"></div>
<div class="r" style="left:129px;top:582px;width:3px;height:3px;background:#f0f0f0"></div>
<div class="r" style="left:132px;top:582px;width:3px;height:3px;background:#f0f0f0"></div>
<div class="r" style="left:135px;top:582px;width:3px;height:3px;background:#f0f0f0"></div>
<div class="r" style="left:138px;top:582px;width:3px;height:3px;background:#e0d8d0"></div>
<div class="r" style="left:141px;top:582px;width:3px;height:3px;background:#a8a8a8"></div>
<div class="r" style="left:144px;top:582px;width:3px;height:3px;background:#e8e0e0"></div>
<div class="r" style="left:147px;top:582px;width:3px;height:3px;background:#a8b8c8"></div>
<div class="r" style="left:150px;top:582px;width:3px;height:3px;background:#f0f0f0"></div>
<div class="r" style="left:153px;top:582px;width:3px;height:3px;background:#d8e0d8"></div>
<div class="r" style="left:156px;top:582px;width:3px;height:3px;background:#e0e0d0"></div>
<div class="r" style="left:159px;top:582px;width:3px;height:3px;background:#b8c8c8"></div>
<div class="r" style="left:162px;top:582px;width:3px;height:3px;background:#f0f0f0"></div>
<div class="r" style="left:784px;top:577px;width:2px;height:2px;background:#a8a8a8"></div>
<div class="r" style="left:781px;top:580px;width:2px;height:2px;background:#a8a8a8"></div>
<div class="r" style="left:784px;top:580px;width:2px;height:2px;background:#a8a8a8"></div>
<div class="r" style="left:778px;top:583px;width:2px;height:2px;background:#a8a8a8"></div>
<div class="r" style="left:781px;top:583px;width:2px;height:2px;background:#a8a8a8"></div>
<div class="r" style="left:784px;top:583px;width:2px;height:2px;background:#a8a8a8"></div>
</body></html>
